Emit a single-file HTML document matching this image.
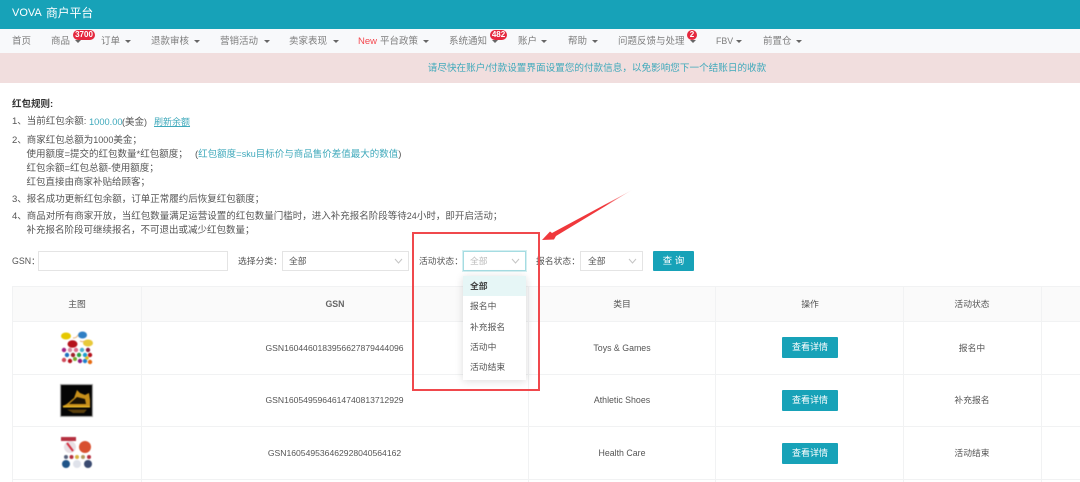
<!DOCTYPE html>
<html lang="zh">
<head>
<meta charset="utf-8">
<title>VOVA 商户平台</title>
<style>
html,body{margin:0;padding:0;width:1080px;height:482px;overflow:hidden;background:#fff}
body{position:relative;font-family:"Liberation Sans","Noto Sans CJK SC",sans-serif;font-size:9.5px;color:#555}
#w{position:absolute;left:0;top:0;width:1080px;height:482px;overflow:hidden;filter:blur(.3px)}
.a,.t,.c{position:absolute}
.t{white-space:nowrap;line-height:14px;height:14px}
.c{white-space:nowrap;line-height:14px;height:14px;transform:translateX(-50%);font-size:8.8px}
.n{color:#7d7d7d;top:35px}
.l{font-size:9px}
.s{font-size:8.8px}
.caret{position:absolute;top:39.5px;width:0;height:0;border-left:3px solid transparent;border-right:3px solid transparent;border-top:3.5px solid #666;margin-left:-3px}
.badge{position:absolute;background:#e5293f;color:#fff;font-weight:bold;font-size:8px;line-height:10px;height:10px;border-radius:5px;text-align:center}
.sel{position:absolute;box-sizing:border-box;background:#fff;border:1px solid #e4e4e4;height:20px;top:251px}
.h{position:absolute;background:#f1f2f3}
.btn{position:absolute;left:782px;width:56px;height:21px;background:#17a2b8;border-radius:1px;color:#fff;text-align:center;line-height:20px;font-size:9px}
.blue{color:#3fa9bb}
</style>
</head>
<body>
<div id="w">
<!-- top bar -->
<div class="a" style="left:0;top:0;width:1080px;height:29px;background:#17a2b8"></div>
<span class="t" style="left:12px;top:5.5px;color:#fff;font-size:11px">VOVA</span>
<span class="t" style="left:46px;top:5.5px;color:#fff;font-size:11.8px">商户平台</span>
<!-- nav -->
<div class="a" style="left:0;top:29px;width:1080px;height:24px;background:#f8f9fb"></div>
<span class="t n" style="left:12px">首页</span>
<span class="t n" style="left:51px">商品</span><i class="caret" style="left:78px"></i>
<span class="t n" style="left:101px">订单</span><i class="caret" style="left:128px"></i>
<span class="t n" style="left:151px">退款审核</span><i class="caret" style="left:197px"></i>
<span class="t n" style="left:220px">营销活动</span><i class="caret" style="left:267px"></i>
<span class="t n" style="left:289px">卖家表现</span><i class="caret" style="left:336px"></i>
<span class="t n" style="left:358px;color:#f4484f">New</span><span class="t n" style="left:380px">平台政策</span><i class="caret" style="left:426px"></i>
<span class="t n" style="left:449px">系统通知</span><i class="caret" style="left:495px"></i>
<span class="t n" style="left:518px">账户</span><i class="caret" style="left:544px"></i>
<span class="t n" style="left:568px">帮助</span><i class="caret" style="left:595px"></i>
<span class="t n" style="left:618px">问题反馈与处理</span><i class="caret" style="left:693px"></i>
<span class="t n" style="left:716px;font-size:8.8px;top:34px">FBV</span><i class="caret" style="left:739px"></i>
<span class="t n" style="left:763px">前置仓</span><i class="caret" style="left:799px"></i>
<span class="badge" style="left:73px;top:30px;width:22px">3700</span>
<span class="badge" style="left:490px;top:30px;width:17px">482</span>
<span class="badge" style="left:687px;top:30px;width:10px">2</span>
<!-- banner -->
<div class="a" style="left:0;top:53px;width:1080px;height:30px;background:#f1dede"></div>
<div class="c" style="left:597px;top:62px;color:#3fa9bb;font-size:9.6px">请尽快在账户/付款设置界面设置您的付款信息，以免影响您下一个结账日的收款</div>
<!-- rules -->
<div class="t" style="left:12px;top:98px;color:#333;font-weight:bold">红包规则:</div>
<span class="t" style="left:12px;top:115px">1、当前红包余额:</span>
<span class="t blue" style="left:89px;top:115px;font-size:9.3px">1000.00</span>
<span class="t" style="left:122px;top:115px"><span class="l">(</span>美金<span class="l">)</span></span>
<span class="t blue" style="left:154px;top:115px;text-decoration:underline;font-size:9px">刷新余额</span>
<div class="t" style="left:12px;top:133px">2、商家红包总额为<span class="l">1000</span>美金；</div>
<div class="t" style="left:26.5px;top:148px">使用额度=提交的红包数量*红包额度；</div>
<div class="t" style="left:195px;top:147px">(<span class="blue">红包额度=<span class="l">sku</span>目标价与商品售价差值最大的数值</span>)</div>
<div class="t" style="left:26.5px;top:162px">红包余额=红包总额-使用额度；</div>
<div class="t" style="left:26.5px;top:176px">红包直接由商家补贴给顾客；</div>
<div class="t" style="left:12px;top:193px">3、报名成功更新红包余额，订单正常履约后恢复红包额度；</div>
<div class="t" style="left:12px;top:209px">4、商品对所有商家开放，当红包数量满足运营设置的红包数量门槛时，进入补充报名阶段等待<span class="l">24</span>小时，即开启活动；</div>
<div class="t" style="left:26.5px;top:224px">补充报名阶段可继续报名，不可退出或减少红包数量；</div>
<!-- filters -->
<span class="t s" style="left:12px;top:254px">GSN：</span>
<div class="sel" style="left:38px;width:190px"></div>
<span class="t s" style="left:238px;top:254px">选择分类：</span>
<div class="sel" style="left:282px;width:127px"></div>
<span class="t s" style="left:289px;top:254px">全部</span>
<svg class="a" style="left:394px;top:258px" width="9" height="6" viewBox="0 0 9 6"><path d="M1 1l3.5 4L8 1" fill="none" stroke="#c4c4c4"/></svg>
<span class="t s" style="left:419px;top:254px">活动状态：</span>
<div class="sel" style="left:463px;width:63px;border-color:#a5dce2;box-shadow:0 0 0 1px #d5eff1"></div>
<span class="t s" style="left:470px;top:254px;color:#bbb">全部</span>
<svg class="a" style="left:511px;top:258px" width="9" height="6" viewBox="0 0 9 6"><path d="M1 1l3.5 4L8 1" fill="none" stroke="#c4c4c4"/></svg>
<span class="t s" style="left:536px;top:254px">报名状态：</span>
<div class="sel" style="left:580px;width:63px"></div>
<span class="t s" style="left:588px;top:254px">全部</span>
<svg class="a" style="left:628px;top:258px" width="9" height="6" viewBox="0 0 9 6"><path d="M1 1l3.5 4L8 1" fill="none" stroke="#c4c4c4"/></svg>
<div class="a" style="left:653px;top:251px;width:41px;height:20px;background:#17a2b8;border-radius:1px;color:#fff;text-align:center;line-height:21px;font-size:9.5px">查 询</div>
<!-- table -->
<div class="a" style="left:12px;top:286px;width:1068px;height:36px;background:#fafafa"></div>
<div class="h" style="left:12px;top:286px;width:1068px;height:1px"></div>
<div class="h" style="left:12px;top:321px;width:1068px;height:1px"></div>
<div class="h" style="left:12px;top:374px;width:1068px;height:1px"></div>
<div class="h" style="left:12px;top:426px;width:1068px;height:1px"></div>
<div class="h" style="left:12px;top:479px;width:1068px;height:1px"></div>
<div class="h" style="left:12px;top:286px;width:1px;height:196px"></div>
<div class="h" style="left:141px;top:286px;width:1px;height:196px"></div>
<div class="h" style="left:528px;top:286px;width:1px;height:196px"></div>
<div class="h" style="left:715px;top:286px;width:1px;height:196px"></div>
<div class="h" style="left:903px;top:286px;width:1px;height:196px"></div>
<div class="h" style="left:1041px;top:286px;width:1px;height:196px"></div>
<span class="c" style="left:77px;top:297px">主图</span>
<span class="c" style="left:335px;top:297px;font-weight:bold;color:#666">GSN</span>
<span class="c" style="left:622px;top:297px">类目</span>
<span class="c" style="left:810px;top:297px">操作</span>
<span class="c" style="left:972px;top:297px">活动状态</span>
<!-- images -->
<svg class="a" style="left:60px;top:331px;filter:blur(.5px)" width="34" height="34" viewBox="0 0 34 34">
<ellipse cx="6" cy="5" rx="5" ry="3.5" fill="#e6c800"/><ellipse cx="22.5" cy="4" rx="4.5" ry="3.5" fill="#2f7fc4"/>
<ellipse cx="12.5" cy="13" rx="5" ry="3.8" fill="#b5121b"/><ellipse cx="28" cy="12" rx="5" ry="3.5" fill="#e8c93a"/>
<path d="M13 7c3 0 4-1 5-3M20 10c2 1 3 1 4 0" stroke="#e8b070" fill="none"/>
<circle cx="4" cy="19" r="2.2" fill="#a3207f"/><circle cx="10" cy="19" r="2.2" fill="#d88aa0"/><circle cx="16" cy="19" r="2.2" fill="#e06a8a"/><circle cx="22" cy="19" r="2.2" fill="#4ab0d0"/><circle cx="28" cy="19" r="2.2" fill="#8c1a3c"/>
<circle cx="7" cy="24" r="2.2" fill="#1d6fc0"/><circle cx="13" cy="24" r="2.2" fill="#a0202a"/><circle cx="19" cy="24" r="2.2" fill="#2aa040"/><circle cx="25" cy="24" r="2.2" fill="#1d9ed0"/><circle cx="30" cy="24" r="2.2" fill="#b5121b"/>
<circle cx="4" cy="29" r="2.2" fill="#d04a5a"/><circle cx="10" cy="30" r="2.2" fill="#b5121b"/><circle cx="15" cy="28" r="2" fill="#74a82a"/><circle cx="20" cy="30" r="2.2" fill="#8c1a7f"/><circle cx="25" cy="30" r="2.2" fill="#1d7fd0"/><circle cx="27" cy="27" r="1.8" fill="#e0c020"/><circle cx="30" cy="31" r="2.2" fill="#e66a10"/>
</svg>
<svg class="a" style="left:60px;top:384px;filter:blur(.4px)" width="33" height="33" viewBox="0 0 33 33">
<rect x=".5" y=".5" width="32" height="32" fill="#050505" stroke="#aaa"/>
<path d="M2 22C7 21 10 17 14 14L17 6 20 9 25 11 29 9 30 16 30 22Z" fill="#c8901a"/>
<path d="M9 20L17 13 25 15 26 20Z" fill="#1a1204"/>
<path d="M3 22h27v1.500H3z" fill="#e8b828"/>
<path d="M7 25.500h20l-3 3.500H13z" fill="#5a3f0c"/>
</svg>
<svg class="a" style="left:60px;top:436px;filter:blur(.4px)" width="34" height="34" viewBox="0 0 34 34">
<rect x="1" y="1" width="15" height="4" fill="#b5303f"/>
<circle cx="10" cy="11" r="6" fill="#e8dfe4"/><path d="M7 7l6 8" stroke="#d5303f" stroke-width="2"/>
<circle cx="25" cy="11" r="6" fill="#d8502f"/>
<circle cx="6" cy="21" r="2" fill="#56607a"/><circle cx="11.5" cy="21" r="2" fill="#b5303f"/><circle cx="17" cy="21" r="2" fill="#d8b040"/><circle cx="23" cy="21" r="2" fill="#b09a60"/><circle cx="29" cy="21" r="2" fill="#b5303f"/>
<circle cx="6" cy="28" r="4" fill="#1f5488"/><circle cx="17" cy="28" r="4" fill="#dfe2ea"/><circle cx="28" cy="28" r="4" fill="#3a4a70"/>
</svg>
<!-- rows -->
<span class="c" style="left:334.5px;top:341px;font-size:8.6px">GSN1604460183956627879444096</span>
<span class="c" style="left:622px;top:341px">Toys &amp; Games</span>
<div class="btn" style="top:337px">查看详情</div>
<span class="c" style="left:972px;top:341px">报名中</span>
<span class="c" style="left:334.5px;top:393px;font-size:8.6px">GSN1605495964614740813712929</span>
<span class="c" style="left:622px;top:393px">Athletic Shoes</span>
<div class="btn" style="top:390px">查看详情</div>
<span class="c" style="left:972px;top:393px">补充报名</span>
<span class="c" style="left:334.5px;top:446px;font-size:8.6px">GSN160549536462928040564162</span>
<span class="c" style="left:622px;top:446px">Health Care</span>
<div class="btn" style="top:443px">查看详情</div>
<span class="c" style="left:972px;top:446px">活动结束</span>
<!-- dropdown -->
<div class="a" style="left:463px;top:276px;width:63px;height:104px;background:#fff;box-shadow:0 1px 8px rgba(0,0,0,.14)"></div>
<div class="a" style="left:463px;top:276px;width:63px;height:20px;background:#e6f6f6"></div>
<span class="t s" style="left:470px;top:279px;font-weight:bold;color:#444">全部</span>
<span class="t s" style="left:470px;top:299px">报名中</span>
<span class="t s" style="left:470px;top:320px">补充报名</span>
<span class="t s" style="left:470px;top:340px">活动中</span>
<span class="t s" style="left:470px;top:360px">活动结束</span>
<!-- annotation -->
<div class="a" style="left:412px;top:232px;width:124px;height:155px;border:2px solid #f0484c"></div>
<svg class="a" style="left:0;top:0" width="1080" height="482" viewBox="0 0 1080 482">
<defs><linearGradient id="g" x1="542" y1="240" x2="632" y2="190" gradientUnits="userSpaceOnUse"><stop offset="0" stop-color="#f0383c"/><stop offset=".7" stop-color="#f0383c"/><stop offset="1" stop-color="#f0383c" stop-opacity=".1"/></linearGradient></defs>
<path d="M542 240L550 231.500 552 233 632 190 556 236 554 239.500Z" fill="url(#g)"/>
</svg>
</div>
</body>
</html>
